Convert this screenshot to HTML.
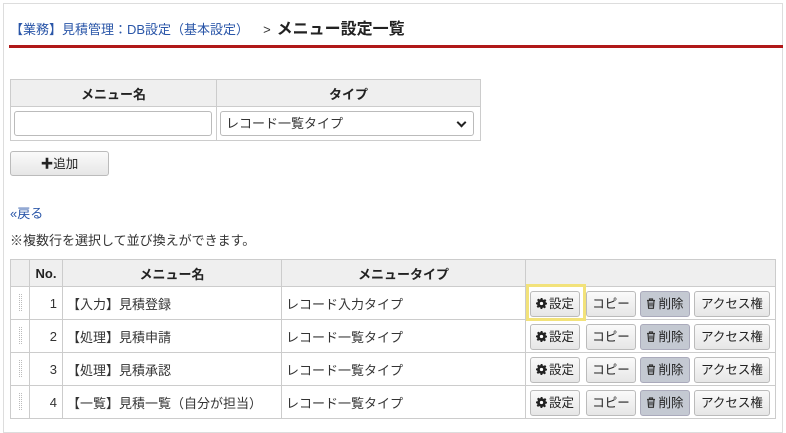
<!DOCTYPE html>
<html><head><meta charset="utf-8"><style>
*{box-sizing:border-box}
body{margin:0;width:786px;height:421px;overflow:hidden;background:#fff;font-family:"Liberation Sans","Noto Sans CJK JP",sans-serif;font-size:13px;color:#333}
.frame{position:absolute;left:3px;top:3px;width:780px;height:430px;border:1px solid #ddd}
.abs{position:absolute}
.title{left:10px;top:15px;font-size:13px;color:#2a56a8;white-space:nowrap}
.title b{color:#222;font-size:16px;margin-left:6px}
.title .gt{color:#333;margin-left:14px}
.red{left:9px;top:45px;width:774px;height:3px;background:#b01818}
table{border-collapse:collapse;position:absolute}
td,th{border:1px solid #ccc;padding:0}
th{background:#efefef;font-weight:bold;height:27px;font-size:13px;color:#222}
.inp{width:198px;height:25px;border:1px solid #bbb;border-radius:3px;margin:3px}
.sel{width:254px;height:25px;border:1px solid #bbb;border-radius:3px;margin:3px;padding-left:5px;line-height:23px;position:relative}
.sel:after{content:"";position:absolute;right:8px;top:7px;width:5px;height:5px;border-right:2px solid #222;border-bottom:2px solid #222;transform:rotate(45deg)}
.btn{position:absolute;border:1px solid #bbb;border-radius:3px;background:linear-gradient(#fafafa,#e6e6e6);text-align:center;font-size:12.5px;color:#222;line-height:24px;height:26px;white-space:nowrap}
.btn svg{vertical-align:-1px;margin-right:2px}
.main td{height:33px;color:#333}
.drag{width:5px;height:18px;margin:auto;background:repeating-linear-gradient(0deg,#fff 0 1px,transparent 1px 2px),repeating-linear-gradient(90deg,#fff 0 1px,#bbb 1px 2px)}
</style></head><body>
<div class="frame"></div>
<div class="abs title">【業務】見積管理：DB設定（基本設定）<span class="gt">&gt;</span><b>メニュー設定一覧</b></div>
<div class="abs red"></div>
<table style="left:10px;top:79px;width:471px">
<tr><th style="width:206px">メニュー名</th><th>タイプ</th></tr>
<tr><td style="height:34px"><div class="inp"></div></td><td><div class="sel">レコード一覧タイプ</div></td></tr>
</table>
<div class="btn" style="left:10px;top:151px;width:99px;height:25px">✚追加</div>
<div class="abs" style="left:10px;top:203px;color:#2a56a8">«戻る</div>
<div class="abs" style="left:10px;top:230px">※複数行を選択して並び換えができます。</div>
<table class="main" style="left:10px;top:259px;width:766px">
<tr><th style="width:19px"></th><th style="width:33px">No.</th><th style="width:219px">メニュー名</th><th style="width:244px">メニュータイプ</th><th></th></tr>
<tr><td><div class="drag"></div></td><td style="text-align:right;padding-right:5px">1</td><td style="padding-left:4px">【入力】見積登録</td><td style="padding-left:4px">レコード入力タイプ</td><td></td></tr>
<tr><td><div class="drag"></div></td><td style="text-align:right;padding-right:5px">2</td><td style="padding-left:4px">【処理】見積申請</td><td style="padding-left:4px">レコード一覧タイプ</td><td></td></tr>
<tr><td><div class="drag"></div></td><td style="text-align:right;padding-right:5px">3</td><td style="padding-left:4px">【処理】見積承認</td><td style="padding-left:4px">レコード一覧タイプ</td><td></td></tr>
<tr><td><div class="drag"></div></td><td style="text-align:right;padding-right:5px">4</td><td style="padding-left:4px">【一覧】見積一覧（自分が担当）</td><td style="padding-left:4px">レコード一覧タイプ</td><td></td></tr>
</table>
<div class="abs" style="left:526px;top:284px;width:60px;height:37px;border:3px solid #f2e27a"></div>
<div id="btns"></div>
<script>
var gear='<svg width="11" height="11" viewBox="0 0 12 12"><path fill="#222" d="M5 0h2l.3 1.6 1.2.5 1.4-.9 1.4 1.4-.9 1.4.5 1.2L12 5v2l-1.6.3-.5 1.2.9 1.4-1.4 1.4-1.4-.9-1.2.5L7 12H5l-.3-1.6-1.2-.5-1.4.9-1.4-1.4.9-1.4-.5-1.2L0 7V5l1.6-.3.5-1.2-.9-1.4 1.4-1.4 1.4.9 1.2-.5z"/><circle cx="6" cy="6" r="1.8" fill="#fff"/></svg>';
var trash='<svg width="10" height="11" viewBox="0 0 10 11"><path fill="none" stroke="#333" stroke-width="1.2" d="M1 2.5h8M3.5 2.5V1h3v1.5M2 2.5l.6 7.8h4.8L8 2.5M4 4.5v4M6 4.5v4"/></svg>';
var h='';[291,324,357,390].forEach(function(y){
h+='<div class="btn" style="left:530px;top:'+y+'px;width:50px">'+gear+'設定</div>';
h+='<div class="btn" style="left:586px;top:'+y+'px;width:50px">コピー</div>';
h+='<div class="btn" style="left:640px;top:'+y+'px;width:50px;background:#c4c9d2;border-color:#aab">'+trash+'削除</div>';
h+='<div class="btn" style="left:694px;top:'+y+'px;width:76px">アクセス権</div>';});
document.getElementById('btns').innerHTML=h;
</script>
</body></html>
